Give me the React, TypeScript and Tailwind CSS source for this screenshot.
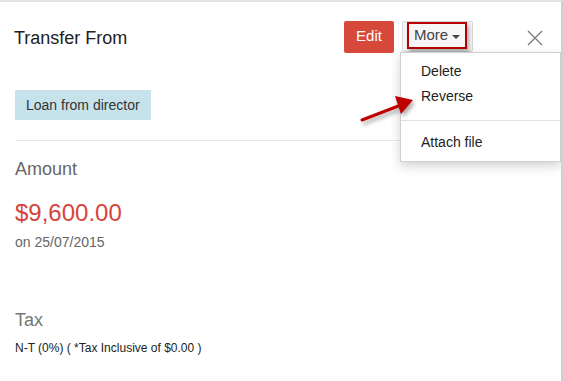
import React from 'react';

const font = { fontFamily: '"Liberation Sans", Arial, sans-serif' };

const CloseIcon: React.FC = () => (
  <svg width="16" height="16" viewBox="0 0 16 16" className="block">
    <path d="M1 1 L15 15 M15 1 L1 15" stroke="#7a7a7a" strokeWidth="1.3" fill="none" />
  </svg>
);

const Arrow: React.FC = () => (
  <svg
    width="70"
    height="40"
    viewBox="0 0 70 40"
    className="absolute left-[355px] top-[88px]"
    style={{ filter: 'drop-shadow(2px 3px 2px rgba(0,0,0,0.35))' }}
  >
    <line x1="7" y1="30" x2="46" y2="15" stroke="#c00000" strokeWidth="3" strokeLinecap="round" />
    <polygon points="58,10 40,6 46,24" fill="#c00000" />
  </svg>
);

const App: React.FC = () => {
  return (
    <div
      className="relative w-[563px] h-[381px] bg-white border-t-2 border-r-2 border-t-[#e2e2e2] border-r-[#d0d0d0] overflow-hidden"
      style={font}
    >
      {/* header */}
      <div className="flex items-center pl-[14px] pr-[18px] pt-[17px]">
        <h2 className="text-[18px] leading-[32px] pt-[3px] text-[#222]">Transfer From</h2>
        <button className="ml-auto w-[50px] h-[32px] rounded-[2px] bg-[#d6493a] text-white text-[15px]">
          Edit
        </button>
        <button className="relative ml-[8px] w-[71px] h-[31px] rounded-[2px] border border-[#d8d8d8] bg-[#f6f6f6]">
          <span className="absolute left-[4px] top-0 w-[60px] h-[27px] border-2 border-[#b80000] shadow-[2px_3px_4px_rgba(0,0,0,0.3)] flex items-center justify-center gap-[4px] text-[15px] text-[#444]">
            More
            <span className="w-0 h-0 border-l-[4px] border-r-[4px] border-t-[4px] border-l-transparent border-r-transparent border-t-[#444] mt-[2px]" />
          </span>
        </button>
        <button className="ml-[54px] w-[16px] h-[16px] mt-[3px]">
          <CloseIcon />
        </button>
      </div>

      {/* body */}
      <div className="pl-[15px]">
        <div className="mt-[36px] inline-block h-[30px] leading-[30px] px-[11px] bg-[#c6e3ec] text-[14px] text-[#333]">
          Loan from director
        </div>
        <div className="mt-[20px] h-px bg-[#e8e8e8]" />

        <div className="mt-[16px] text-[18px] leading-[24px] text-[#666]">Amount</div>
        <div className="mt-[17px] text-[24px] leading-[30px] text-[#d6453a]">$9,600.00</div>
        <div className="mt-[4px] text-[14px] leading-[20px] text-[#666]">on 25/07/2015</div>

        <div className="mt-[56px] text-[18px] leading-[24px] text-[#777]">Tax</div>
        <div className="mt-[7px] text-[12px] leading-[18px] text-[#222]">
          N-T (0%) ( *Tax Inclusive of $0.00 )
        </div>
      </div>

      {/* dropdown */}
      <div className="absolute left-[400px] top-[50px] w-[161px] bg-white border border-[#cfcfcf] shadow-[0_4px_10px_rgba(0,0,0,0.18)] pt-[6px] pb-[6px]">
        <div className="h-[25px] leading-[25px] pl-[20px] text-[14px] text-[#222]">Delete</div>
        <div className="h-[25px] leading-[25px] pl-[20px] text-[14px] text-[#222]">Reverse</div>
        <div className="mt-[11px] mb-[9px] h-px bg-[#e2e2e2]" />
        <div className="h-[25px] leading-[25px] pl-[20px] text-[14px] text-[#222]">Attach file</div>
      </div>

      <Arrow />
    </div>
  );
};

export default App;
